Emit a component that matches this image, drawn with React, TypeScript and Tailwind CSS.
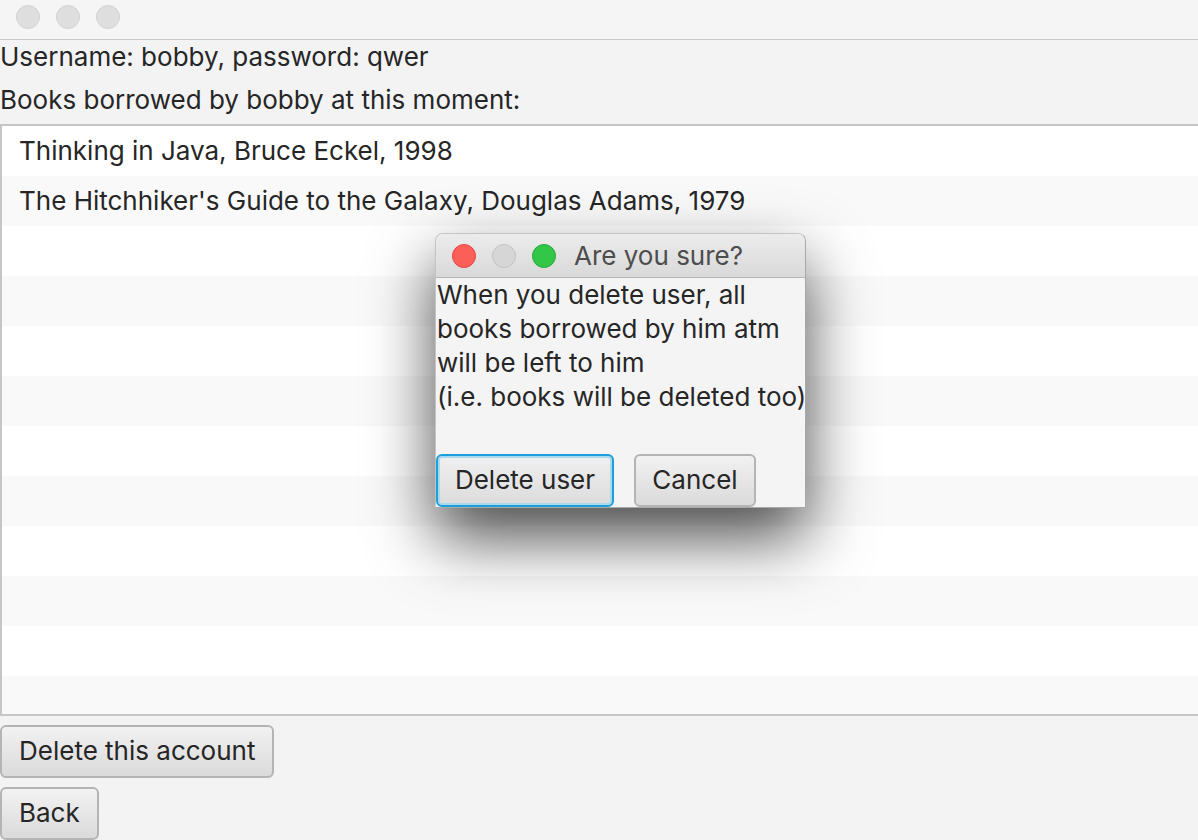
import React from "react";

const books = [
  "Thinking in Java, Bruce Eckel, 1998",
  "The Hitchhiker's Guide to the Galaxy, Douglas Adams, 1979",
];

function Light({ color }: { color: string }) {
  return <span className={`block w-[24px] h-[24px] rounded-full border ${color}`} />;
}

export default function App() {
  const rows = Array.from({ length: 12 }, (_, i) => books[i] ?? "");

  return (
    <div
      className="relative w-[1198px] h-[840px] overflow-hidden bg-[#f3f3f3] text-[#262626] text-[26px]"
      style={{ fontFamily: 'Inter, "Liberation Sans", Arial, sans-serif' }}
    >
      {/* Window title bar */}
      <div className="h-[40px] flex items-start pt-[5px] gap-[16px] pl-[16px] border-b border-[#c8c8c8] bg-[#f5f5f5]">
        <Light color="bg-[#dedede] border-[#d2d2d2]" />
        <Light color="bg-[#dedede] border-[#d2d2d2]" />
        <Light color="bg-[#dedede] border-[#d2d2d2]" />
      </div>

      <div className="h-[41px] flex items-center leading-none pb-[8px]">Username: bobby, password: qwer</div>
      <div className="h-[43px] flex items-center leading-none pb-[6px]">Books borrowed by bobby at this moment:</div>

      {/* Books list */}
      <div className="h-[592px] border-t-2 border-l-2 border-b-2 border-[#c6c6c6] bg-white overflow-hidden">
        {rows.map((b, i) => (
          <div
            key={i}
            className={`h-[50px] flex items-center pl-[17px] pb-[2px] ${i % 2 === 1 ? "bg-[#f9f9f9]" : "bg-white"}`}
          >
            {b}
          </div>
        ))}
      </div>

      <div className="flex flex-col items-start gap-[9px] pt-[9px]">
        <button className="h-[53px] px-[17px] pb-[2px] rounded-[6px] border-2 border-[#b4b4b4] bg-gradient-to-b from-[#f2f2f2] to-[#dadada] text-[#262626]">
          Delete this account
        </button>
        <button className="h-[53px] px-[17px] pb-[2px] rounded-[6px] border-2 border-[#b4b4b4] bg-gradient-to-b from-[#f2f2f2] to-[#dadada] text-[#262626]">
          Back
        </button>
      </div>

      {/* Confirmation dialog */}
      <div className="absolute left-[435px] top-[233px] w-[371px] h-[275px] rounded-t-[8px] overflow-hidden bg-[#f4f4f4] border border-[#c4c4c4] border-r-[#a8a8a8] border-b-[#a8a8a8] shadow-[0_30px_65px_rgba(0,0,0,0.7)] flex flex-col">
        <div className="h-[44px] shrink-0 flex items-center gap-[16px] pl-[16px] border-b border-[#b8b8b8] bg-gradient-to-b from-[#ececec] to-[#d9d9d9]">
          <Light color="bg-[#fc5f57] border-[#e2463f]" />
          <Light color="bg-[#d6d6d6] border-[#c2c2c2]" />
          <Light color="bg-[#33c748] border-[#27aa35]" />
          <span className="ml-[2px] text-[#4d4d4d]">Are you sure?</span>
        </div>
        <div className="pl-[1px] leading-[34px] whitespace-nowrap">
          <div>When you delete user, all</div>
          <div>books borrowed by him atm</div>
          <div>will be left to him</div>
          <div>(i.e. books will be deleted too)</div>
        </div>
        <div className="mt-auto flex items-end gap-[20px]">
          <button className="h-[53px] w-[178px] pb-[2px] rounded-[6px] border-2 border-[#1a9fd9] ring-2 ring-[#a9d9ef] ring-inset bg-gradient-to-b from-[#f0f0f0] to-[#dcdcdc] text-[#262626]">
            Delete user
          </button>
          <button className="h-[53px] w-[122px] pb-[2px] rounded-[6px] border-2 border-[#b4b4b4] bg-gradient-to-b from-[#f2f2f2] to-[#dadada] text-[#262626]">
            Cancel
          </button>
        </div>
      </div>
    </div>
  );
}
